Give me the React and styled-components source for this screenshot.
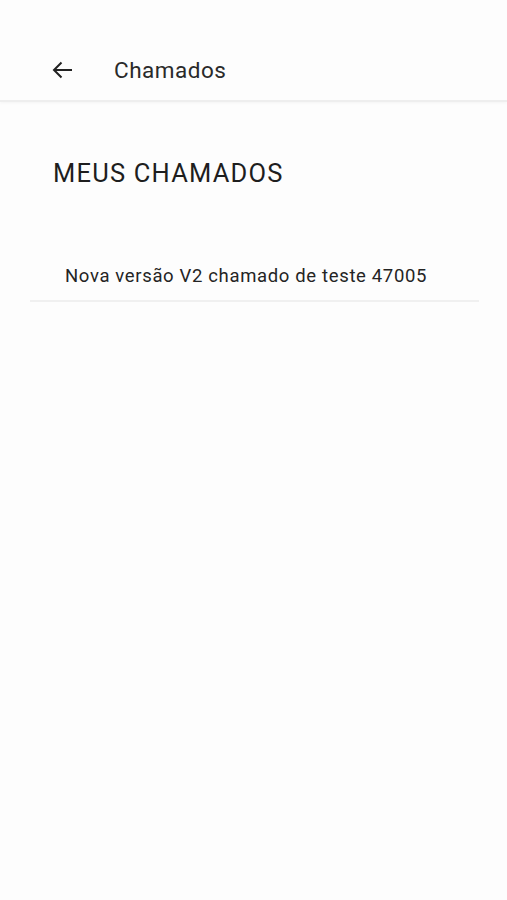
import styled, { createGlobalStyle } from 'styled-components'

const GlobalStyle = createGlobalStyle`
  html, body {
    margin: 0;
    padding: 0;
    background: #fdfdfd;
    font-family: Roboto, "Noto Sans", sans-serif;
  }
`

const Screen = styled.div`
  min-height: 900px;
  background: #fdfdfd;
  color: #222;
`

const Header = styled.header`
  height: 102px;
  display: flex;
  align-items: center;
  padding: 40px 0 0 50px;
  box-sizing: border-box;
  border-bottom: 2px solid #eeeeee;
  box-shadow: 0 1px 3px rgba(0, 0, 0, 0.04);
`

const BackButton = styled.button`
  border: none;
  background: none;
  padding: 0;
  width: 26px;
  height: 26px;
  display: flex;
  align-items: center;
  justify-content: center;
  color: #222;
`

const Title = styled.h1`
  margin: 0 0 0 38px;
  font-size: 22.5px;
  font-weight: 400;
  letter-spacing: 0.5px;
  color: #2a2a2a;
`

const Content = styled.main`
  padding: 56px 28px 0 30px;
`

const SectionTitle = styled.h2`
  margin: 0 0 0 23px;
  font-size: 25.5px;
  font-weight: 400;
  color: #1e1e1e;
  letter-spacing: 1.2px;
`

const List = styled.ul`
  list-style: none;
  margin: 65px 0 0;
  padding: 0;
`

const Item = styled.li`
  padding: 12px 0 13px 35px;
  font-size: 18.5px;
  letter-spacing: 0.65px;
  color: #242424;
  border-bottom: 2px solid #f0f0f0;
`

function BackArrow() {
  return (
    <svg width="24" height="24" viewBox="0 0 24 24" fill="none">
      <path d="M21 12H3.5M10.5 4.5L3 12l7.5 7.5" stroke="currentColor" strokeWidth="2" />
    </svg>
  )
}

export default function App() {
  const chamados = ['Nova versão V2 chamado de teste 47005']

  return (
    <>
      <GlobalStyle />
      <Screen>
        <Header>
          <BackButton aria-label="Voltar">
            <BackArrow />
          </BackButton>
          <Title>Chamados</Title>
        </Header>
        <Content>
          <SectionTitle>MEUS CHAMADOS</SectionTitle>
          <List>
            {chamados.map((c) => (
              <Item key={c}>{c}</Item>
            ))}
          </List>
        </Content>
      </Screen>
    </>
  )
}
